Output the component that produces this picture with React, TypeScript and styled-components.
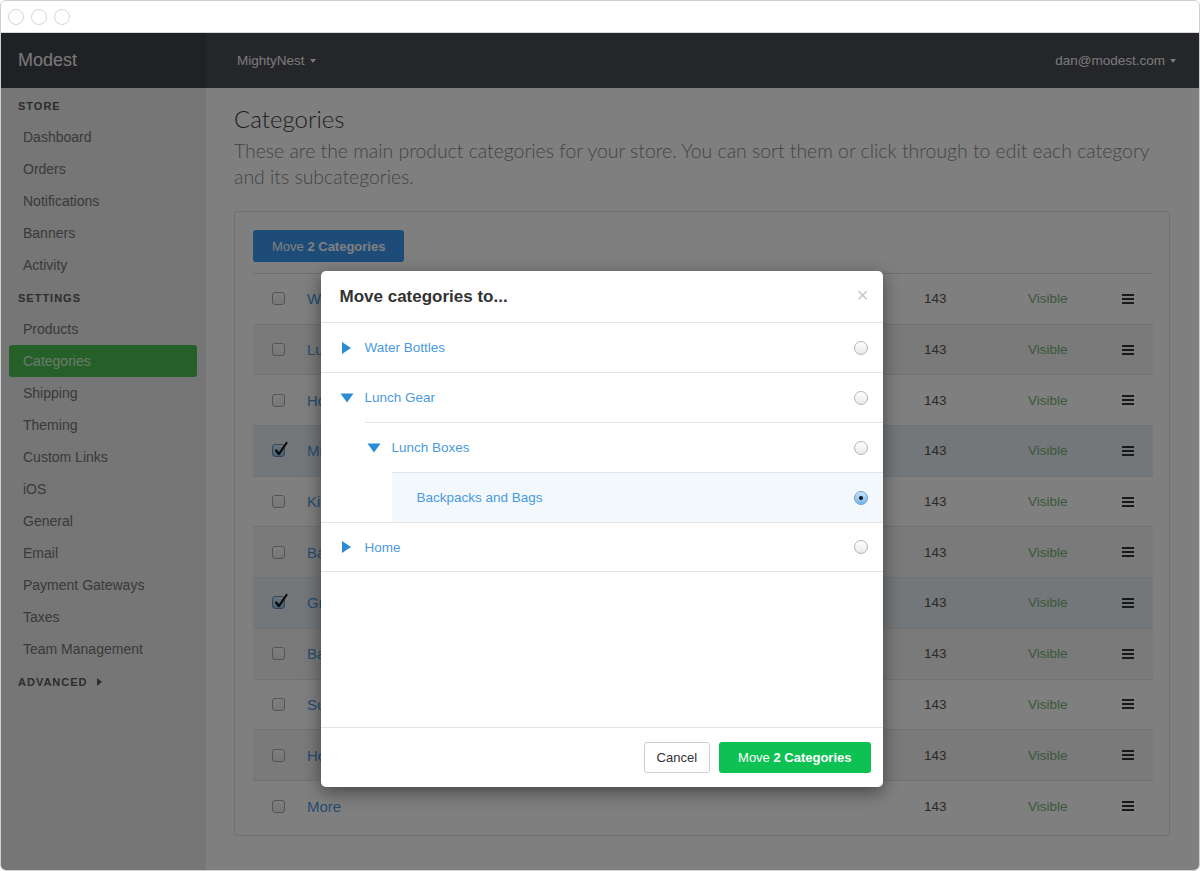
import React from 'react'
import styled, { createGlobalStyle } from 'styled-components'

const GlobalStyle = createGlobalStyle`
	html, body {
		margin: 0;
		padding: 0;
		background: #fff;
	}
	body {
		font-family: 'Liberation Sans', Arial, sans-serif;
		color: #333;
	}
	* {
		box-sizing: border-box;
	}
`

const link = '#4a9ae0'

// Window chrome
const Window = styled.div`
	position: relative;
	display: flex;
	flex-direction: column;
	width: 1200px;
	height: 871px;
	border: 1px solid #cfcfcf;
	border-radius: 6px;
	overflow: hidden;
	background: #fff;
`

const TitleBar = styled.div`
	flex: none;
	display: flex;
	align-items: center;
	gap: 7px;
	height: 32px;
	padding-left: 7px;
	border-bottom: 1px solid #d8d8d8;
`

const Light = styled.span`
	width: 16px;
	height: 16px;
	border-radius: 50%;
	border: 1px solid #d6d6d6;
	background: #fff;
`

const AppArea = styled.div`
	position: relative;
	flex: 1;
	display: grid;
	grid-template-columns: 205px 1fr;
	grid-template-rows: 55px 1fr;
	min-height: 0;
`

// Header
const Brand = styled.div`
	display: flex;
	align-items: center;
	padding-left: 17px;
	background: #404248;
	color: #f2f2f2;
	font-size: 18px;
`

const TopNav = styled.div`
	display: flex;
	align-items: center;
	justify-content: space-between;
	padding: 0 23px 0 31px;
	background: #4a4c54;
	color: #f2f2f2;
	font-size: 13.5px;
`

const NavMenu = styled.span`
	display: inline-flex;
	align-items: center;
	gap: 5px;
`

const Caret = styled.span`
	width: 0;
	height: 0;
	border-left: 3.5px solid transparent;
	border-right: 3.5px solid transparent;
	border-top: 4px solid currentColor;
`

// Sidebar
const Sidebar = styled.nav`
	background: #ececec;
	padding-top: 1px;
`

const SectionLabel = styled.div`
	display: flex;
	align-items: center;
	gap: 9px;
	height: 30px;
	margin-top: 2px;
	padding-left: 17px;
	color: #5a5a5a;
	font-size: 11px;
	font-weight: bold;
	letter-spacing: 1px;
`

const ArrowRight = styled.span`
	width: 0;
	height: 0;
	border-top: 4px solid transparent;
	border-bottom: 4px solid transparent;
	border-left: 5px solid #5a5a5a;
`

const NavItem = styled.div<{ $active?: boolean }>`
	display: flex;
	align-items: center;
	height: 32px;
	margin: 0 9px 0 8px;
	padding-left: 14px;
	border-radius: 3px;
	font-size: 14px;
	color: ${ p => p.$active ? 'rgba(255,255,255,0.8)' : '#747474' };
	background: ${ p => p.$active ? '#4bc152' : 'transparent' };
`

// Main content
const Main = styled.main`
	background: #fff;
	padding: 16px 29px 0 28px;
	min-width: 0;
`

const Title = styled.h1`
	margin: 0;
	font-family: Lato, 'Liberation Sans', sans-serif;
	font-weight: 300;
	font-size: 24px;
	line-height: 30px;
	color: #3c3c3c;
`

const Lead = styled.p`
	margin: 4px 0 21px;
	font-family: Lato, 'Liberation Sans', sans-serif;
	font-weight: 300;
	font-size: 19.4px;
	line-height: 26px;
	color: #888;
`

const Panel = styled.section`
	border: 1px solid #e2e2e2;
	border-radius: 3px;
	padding: 18px 16px 3px 18px;
	background: #fff;
`

const Button = styled.button<{ $variant?: 'default' | 'primary' | 'success' }>`
	height: 32px;
	padding: 0 18px;
	border-radius: 3px;
	font-family: 'Liberation Sans', Arial, sans-serif;
	font-size: 13px;
	cursor: pointer;
	border: 1px solid ${ p => p.$variant === 'default' ? '#cfcfcf' : 'transparent' };
	color: ${ p => p.$variant === 'default' ? '#333' : '#fff' };
	background: ${ p => p.$variant === 'primary' ? '#3c98f2' : p.$variant === 'success' ? '#0dc152' : '#fff' };

	b {
		font-weight: bold;
	}
`

const Table = styled.div`
	margin-top: 11px;
	border-top: 1px solid #dedede;
`

const Row = styled.div<{ $tone: 'plain' | 'striped' | 'selected' }>`
	display: grid;
	grid-template-columns: 54px 1fr 104px 75px 50px;
	align-items: center;
	height: 50.7px;
	border-bottom: 1px solid #e4e4e4;
	background: ${ p => p.$tone === 'selected' ? '#e6eef4' : p.$tone === 'striped' ? '#f5f5f5' : '#fff' };

	&:last-child {
		border-bottom: none;
	}
`

const CheckCell = styled.div`
	display: flex;
	padding-left: 19px;
`

const Check = styled.span<{ $checked?: boolean }>`
	position: relative;
	width: 13px;
	height: 13px;
	border-radius: 3px;
	border: 1px solid ${ p => p.$checked ? '#6a8fb2' : '#a9a9a9' };
	background: ${ p => p.$checked ? 'linear-gradient(#cfe6fb, #8fc0ec)' : 'linear-gradient(#fff, #ececec)' };

	svg {
		position: absolute;
		left: 0;
		top: -4px;
	}
`

const Name = styled.div`
	font-size: 15px;
	color: ${ link };
	white-space: nowrap;
	overflow: hidden;
`

const Count = styled.div`
	font-size: 13.5px;
	color: #555;
`

const Status = styled.div`
	font-size: 13.5px;
	color: #76b076;
`

const Handle = styled.div`
	display: flex;
	justify-content: center;
`

// Modal
const Overlay = styled.div`
	position: absolute;
	inset: 0;
	display: flex;
	justify-content: center;
	align-items: flex-start;
	padding: 238px 0 0 3px;
	background: rgba(0, 0, 0, 0.5);
`

const Modal = styled.div`
	display: flex;
	flex-direction: column;
	width: 562px;
	border-radius: 5px;
	background: #fff;
	box-shadow: 0 5px 18px rgba(0, 0, 0, 0.45);
	overflow: hidden;
`

const ModalHeader = styled.div`
	display: flex;
	align-items: center;
	justify-content: space-between;
	height: 52px;
	padding: 0 14px 0 19px;
	border-bottom: 1px solid #e5e5e5;
`

const ModalTitle = styled.h4`
	margin: 0;
	font-size: 17px;
	font-weight: bold;
	color: #333;
`

const Close = styled.span`
	margin-top: -4px;
	font-size: 20px;
	line-height: 1;
	color: #c8c8c8;
`

const ModalBody = styled.div`
	height: 404px;
`

const TreeRow = styled.div<{ $indent: number; $pad: number; $selected?: boolean }>`
	display: flex;
	align-items: center;
	gap: 11px;
	height: 50px;
	margin-left: ${ p => p.$indent }px;
	padding: 0 15px 0 ${ p => p.$pad }px;
	background: ${ p => p.$selected ? '#f3f8fd' : '#fff' };

	& + & {
		border-top: 1px solid #e5e5e5;
	}

	&:first-child {
		height: 49px;
	}

	&:last-child {
		border-bottom: 1px solid #e5e5e5;
	}
`

const Toggle = styled.span`
	flex: none;
	display: flex;
	width: 14px;
	height: 14px;
`

const TreeLabel = styled.span`
	flex: 1;
	font-size: 13.5px;
	color: ${ link };
`

const Radio = styled.span<{ $checked?: boolean }>`
	display: flex;
	align-items: center;
	justify-content: center;
	width: 14px;
	height: 14px;
	border-radius: 50%;
	border: 1px solid ${ p => p.$checked ? '#6f9ccb' : '#b5b5b5' };
	background: ${ p => p.$checked ? 'linear-gradient(#c9e4fb, #74b6ee)' : 'linear-gradient(#fff, #e9e9e9)' };

	&::after {
		content: '';
		display: ${ p => p.$checked ? 'block' : 'none' };
		width: 4px;
		height: 4px;
		border-radius: 50%;
		background: #111;
	}
`

const ModalFooter = styled.div`
	display: flex;
	align-items: center;
	justify-content: flex-end;
	gap: 9px;
	height: 60px;
	padding-right: 12px;
	border-top: 1px solid #e5e5e5;

	${ Button } {
		height: 31px;
	}
`

const CancelButton = styled(Button)`
	padding: 0 12px;
`

const TriangleIcon = ({ open }: { open?: boolean }) => (
	<svg width="14" height="14" viewBox="0 0 14 14">
		{open
			? <polygon points="0.5,2.5 13.5,2.5 7,11.5" fill="#2c8bd5" />
			: <polygon points="2,1 11,7 2,13" fill="#2c8bd5" />}
	</svg>
)

const HamburgerIcon = () => (
	<svg width="12" height="10" viewBox="0 0 12 10">
		<rect x="0" y="0" width="12" height="2" fill="#333" />
		<rect x="0" y="4" width="12" height="2" fill="#333" />
		<rect x="0" y="8" width="12" height="2" fill="#333" />
	</svg>
)

const CheckMark = () => (
	<svg width="16" height="16" viewBox="0 0 16 16">
		<path d="M3 9.5 L6 13 L13.5 2" fill="none" stroke="#111" strokeWidth="2.2" strokeLinecap="round" strokeLinejoin="round" />
	</svg>
)

const storeLinks = ['Dashboard', 'Orders', 'Notifications', 'Banners', 'Activity']
const settingsLinks = [
	'Products', 'Categories', 'Shipping', 'Theming', 'Custom Links', 'iOS',
	'General', 'Email', 'Payment Gateways', 'Taxes', 'Team Management'
]

const categories = [
	'Water Bottles', 'Lunch Gear', 'Home', 'MightyNest Picks', 'Kitchen', 'Bath',
	'Green Cleaning', 'Baby', 'Summer', 'Holiday', 'More'
]
const checkedRows = [3, 6]

const tree = [
	{ label: 'Water Bottles', indent: 0, pad: 19, toggle: 'closed' },
	{ label: 'Lunch Gear', indent: 0, pad: 19, toggle: 'open' },
	{ label: 'Lunch Boxes', indent: 44, pad: 2, toggle: 'open' },
	{ label: 'Backpacks and Bags', indent: 71, pad: 0, toggle: null, selected: true },
	{ label: 'Home', indent: 0, pad: 19, toggle: 'closed' }
]

const App = () => (
	<>
		<GlobalStyle />
		<Window>
			<TitleBar>
				<Light />
				<Light />
				<Light />
			</TitleBar>
			<AppArea>
				<Brand>Modest</Brand>
				<TopNav>
					<NavMenu>MightyNest <Caret /></NavMenu>
					<NavMenu>dan@modest.com <Caret /></NavMenu>
				</TopNav>

				<Sidebar>
					<SectionLabel>STORE</SectionLabel>
					{storeLinks.map(item => <NavItem key={ item }>{item}</NavItem>)}
					<SectionLabel>SETTINGS</SectionLabel>
					{settingsLinks.map(item => (
						<NavItem key={ item } $active={ item === 'Categories' }>{item}</NavItem>
					))}
					<SectionLabel>ADVANCED <ArrowRight /></SectionLabel>
				</Sidebar>

				<Main>
					<Title>Categories</Title>
					<Lead>
						These are the main product categories for your store. You can sort them or click through to edit each category and its subcategories.
					</Lead>
					<Panel>
						<Button $variant="primary">Move <b>2 Categories</b></Button>
						<Table>
							{categories.map((name, i) => {
								const checked = checkedRows.includes(i)
								const tone = checked ? 'selected' : i % 2 === 1 ? 'striped' : 'plain'
								return (
									<Row key={ name } $tone={ tone }>
										<CheckCell>
											<Check $checked={ checked }>{checked && <CheckMark />}</Check>
										</CheckCell>
										<Name>{name}</Name>
										<Count>143</Count>
										<Status>Visible</Status>
										<Handle><HamburgerIcon /></Handle>
									</Row>
								)
							})}
						</Table>
					</Panel>
				</Main>

				<Overlay>
					<Modal>
						<ModalHeader>
							<ModalTitle>Move categories to...</ModalTitle>
							<Close>×</Close>
						</ModalHeader>
						<ModalBody>
							{tree.map(node => (
								<TreeRow key={ node.label } $indent={ node.indent } $pad={ node.pad } $selected={ node.selected }>
									<Toggle>{node.toggle && <TriangleIcon open={ node.toggle === 'open' } />}</Toggle>
									<TreeLabel>{node.label}</TreeLabel>
									<Radio $checked={ node.selected } />
								</TreeRow>
							))}
						</ModalBody>
						<ModalFooter>
							<CancelButton $variant="default">Cancel</CancelButton>
							<Button $variant="success">Move <b>2 Categories</b></Button>
						</ModalFooter>
					</Modal>
				</Overlay>
			</AppArea>
		</Window>
	</>
)

export default App
